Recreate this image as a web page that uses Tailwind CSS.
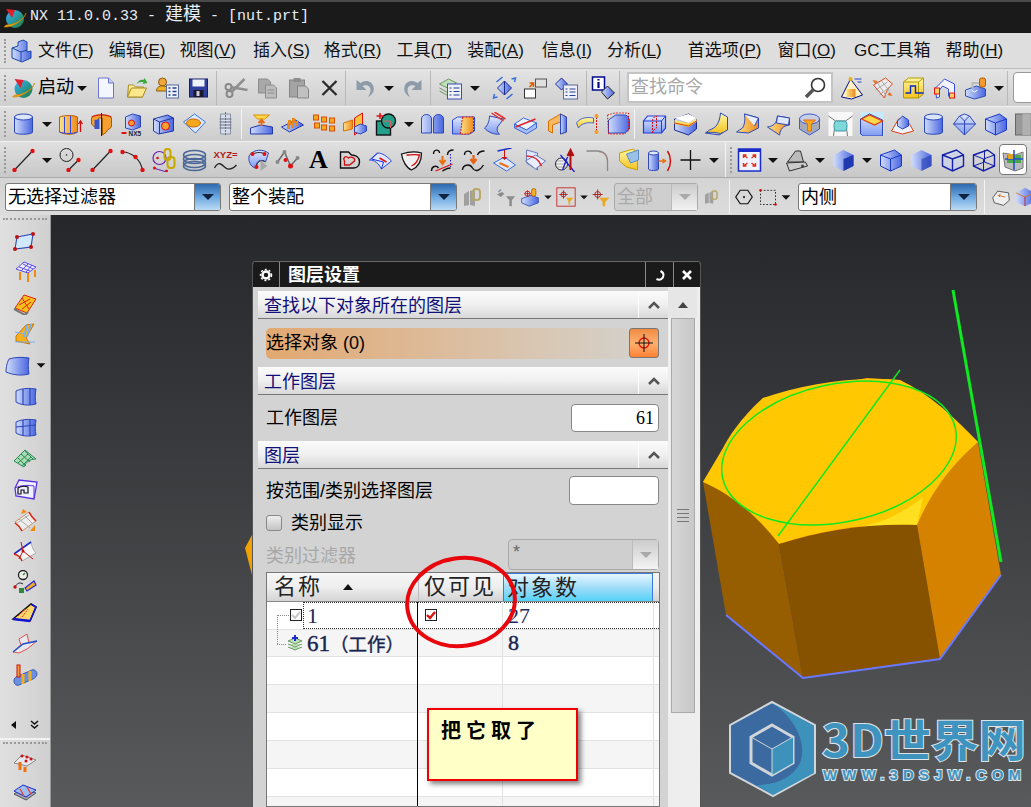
<!DOCTYPE html>
<html lang="zh-CN">
<head>
<meta charset="UTF-8">
<title>NX 11.0.0.33 - 建模 - [nut.prt]</title>
<script src="https://cdn.jsdelivr.net/npm/@tailwindcss/browser@4"></script>
</head>
<body class="w-[1031px] h-[807px] overflow-hidden bg-[#d8d8d8] text-black font-['Liberation_Sans','Noto_Sans_CJK_SC',sans-serif]">

<!-- shared icons -->
<svg class="absolute w-0 h-0">
<defs>
<linearGradient id="bl" x1="0" x2="1" y1="0" y2="0"><stop offset="0" stop-color="#cfdcfb"/><stop offset="1" stop-color="#4a66e0"/></linearGradient>
<linearGradient id="bv" x1="0" x2="0" y1="0" y2="1"><stop offset="0" stop-color="#dfe7fd"/><stop offset="1" stop-color="#7f9bf0"/></linearGradient>
<linearGradient id="ol" x1="0" x2="1" y1="0" y2="0"><stop offset="0" stop-color="#fbe28a"/><stop offset="1" stop-color="#f08a1c"/></linearGradient>
<linearGradient id="yl" x1="0" x2="0" y1="0" y2="1"><stop offset="0" stop-color="#fff7a8"/><stop offset="1" stop-color="#f4c21e"/></linearGradient>
<linearGradient id="gl" x1="0" x2="1" y1="0" y2="1"><stop offset="0" stop-color="#38b6ff"/><stop offset="1" stop-color="#1b7a3a"/></linearGradient>
</defs>
<symbol id="nx" viewBox="0 0 24 24"><circle cx="12" cy="13" r="9" fill="url(#gl)"/><path d="M1 21C8 22 21 15 23 7c-2 7-12 12-20 12z" fill="#f2a81d" stroke="#c87c00" stroke-width=".6"/><path d="M3 3l9 1-3 8z" fill="#e0202a"/></symbol>
<symbol id="block" viewBox="0 0 24 24"><path d="M3 9l6-2v-4l5-2 4 2v10l4-1v7l-9 4-10-4z" fill="url(#bl)" stroke="#1c47a8"/><path d="M3 9l9 4 6-2M12 13v9" fill="none" stroke="#1c47a8"/></symbol>
<symbol id="doc" viewBox="0 0 24 24"><path d="M5 2h10l5 5v15H5z" fill="#f3f5ff" stroke="#6a74c8"/><path d="M15 2v5h5" fill="#c8cff2" stroke="#6a74c8"/></symbol>
<symbol id="folder" viewBox="0 0 24 24"><path d="M3 21l1-12h5l2 2h8l-1 10z" fill="url(#yl)" stroke="#a58a2a"/><path d="M3 21l4-9h15l-4 9z" fill="#fbe88a" stroke="#a58a2a"/><path d="M12 8c2-4 5-5 7-4l1-2 3 5-5 1 1-2c-2 0-5 0-7 2z" fill="#3aa93a"/></symbol>
<symbol id="user" viewBox="0 0 24 24"><circle cx="7" cy="6" r="4" fill="#f0a83c" stroke="#8a5a14"/><path d="M1 15c0-4 3-5 6-5s5 1 5 3v2z" fill="#f2b01e" stroke="#8a5a14"/><rect x="11" y="9" width="12" height="13" fill="#eef1fa" stroke="#5a6a9a"/><path d="M13 12h2M17 12h4M13 15.500h2M17 15.500h4M13 19h2M17 19h4" stroke="#27408f" stroke-width="1.300"/></symbol>
<symbol id="floppy" viewBox="0 0 24 24"><rect x="3" y="3" width="18" height="18" fill="#2e3f9e" stroke="#16205e"/><rect x="6" y="3.500" width="12" height="7" fill="#eef1fa"/><rect x="7" y="14" width="10" height="7" fill="#1a1a2a"/><rect x="10" y="15" width="3" height="5" fill="#ccd"/></symbol>
<symbol id="scissors" viewBox="0 0 24 24"><circle cx="5" cy="18" r="3" fill="none" stroke="#8a8a8a" stroke-width="2"/><circle cx="4" cy="11" r="3" fill="none" stroke="#8a8a8a" stroke-width="2"/><path d="M7 16L20 3M6 11l17 3" stroke="#8f8f8f" stroke-width="2.500" fill="none"/></symbol>
<symbol id="copy" viewBox="0 0 24 24"><path d="M3 3h9l3 3v11H3z" fill="#a8a8a8" stroke="#8c8c8c"/><path d="M10 9h8l3 3v10H10z" fill="#bcbcbc" stroke="#8c8c8c"/><path d="M12 14h7M12 17h7" stroke="#8c8c8c"/></symbol>
<symbol id="paste" viewBox="0 0 24 24"><rect x="3" y="4" width="15" height="17" fill="#a4a4a4" stroke="#858585"/><rect x="7" y="2" width="7" height="4" fill="#8c8c8c"/><path d="M11 10h8l3 3v9H11z" fill="#c0c0c0" stroke="#858585"/></symbol>
<symbol id="x" viewBox="0 0 24 24"><path d="M5 5l14 14M19 5L5 19" stroke="#2b2b2b" stroke-width="2.300"/></symbol>
<symbol id="undo" viewBox="0 0 24 24"><path d="M3 4v10h10l-4-4c4-2 8 0 8 4 0 3-1 5-3 7 5-2 7-6 6-10-1-6-8-8-13-4z" fill="#8e9ba8"/></symbol>
<symbol id="redo" viewBox="0 0 24 24"><path d="M21 4v10H11l4-4c-4-2-8 0-8 4 0 3 1 5 3 7-5-2-7-6-6-10 1-6 8-8 13-4z" fill="#8e9ba8"/></symbol>
<symbol id="layers" viewBox="0 0 24 24"><path d="M1 8l9-5 8 4-9 5zM1 12l9 5M1 15l9 5" fill="#bfe0b8" stroke="#6f9a66"/><rect x="9" y="8" width="14" height="15" fill="#eef1fa" stroke="#3a4fb4"/><path d="M11 12h2M15 12h6M11 15.500h2M15 15.500h6M11 19h2M15 19h6" stroke="#27408f" stroke-width="1.200"/></symbol>
<symbol id="dia" viewBox="0 0 24 24"><path d="M5 12l7-7 7 7-7 7z" fill="url(#bl)" stroke="#1a2c8f"/><path d="M12 5v14" stroke="#1a2c8f"/><path d="M2 18l-1 4 4-1M22 6l1-4-4 1M4 6l6-5M20 18l-6 5" fill="none" stroke="#3a6be0" stroke-width="1.500"/></symbol>
<symbol id="swap" viewBox="0 0 24 24"><rect x="12" y="3" width="11" height="8" fill="#dfdfdf" stroke="#555"/><rect x="1" y="13" width="11" height="9" fill="#fff" stroke="#333"/><path d="M6 11l4-4M6 7h4v4" stroke="#e05a00" stroke-width="1.600" fill="none"/></symbol>
<symbol id="dlist" viewBox="0 0 24 24"><path d="M1 8l6-6 6 6-6 6z" fill="url(#bl)" stroke="#1a2c8f"/><rect x="9" y="9" width="14" height="14" fill="#eef1fa" stroke="#5a6a9a"/><path d="M11 13h2M15 13h6M11 16h2M15 16h6M11 19.500h2M15 19.500h6" stroke="#27408f" stroke-width="1.200"/></symbol>
<symbol id="info" viewBox="0 0 24 24"><rect x="1" y="1" width="12" height="13" fill="#fff" stroke="#000a8a" stroke-width="1.500"/><path d="M7 3v1.500M7 6v6" stroke="#000a8a" stroke-width="2.200"/><path d="M10 16l6-6 7 7-7 6z" fill="url(#bl)" stroke="#222"/></symbol>
<symbol id="pyr" viewBox="0 0 24 24"><path d="M11 3L2 21l10 2 11-4z" fill="#fff2c0" stroke="#000a8a"/><path d="M7 13h9v8H7z" fill="url(#ol)"/><circle cx="11" cy="3" r="2" fill="#e8b020"/><path d="M15 3h7M18 6h4" stroke="#2244cc"/></symbol>
<symbol id="gridc" viewBox="0 0 24 24"><path d="M3 9l12-7 7 6c-4 3-7 8-8 14z" fill="#ececec" stroke="#d84a20"/><path d="M7 7l8 12M11 5l8 10M5 14l12-8M9 19l10-8" stroke="#aaa"/><path d="M2 4l5 1-2 3zM22 20l-5-1 2-3z" fill="#e86a10"/></symbol>
<symbol id="ybox" viewBox="0 0 24 24"><path d="M2 6l5-4h15v16l-5 4H2z" fill="url(#yl)" stroke="#b49a00"/><path d="M2 6h15v16M17 6l5-4" stroke="#b49a00" fill="none"/><path d="M4 17h5V10h5v7h8" stroke="#0a2ac0" fill="none" stroke-width="1.400"/></symbol>
<symbol id="wire" viewBox="0 0 24 24"><path d="M3 12l9-9 10 5v12l-4 2-2-2v-7l-6-3-3 4v7l-3 1z" fill="#f3f3ff" stroke="#3a4fe0"/><rect x="2" y="12" width="5" height="6" fill="#ffd060" stroke="#e01010"/><rect x="17" y="17" width="5" height="5" fill="#ffd060" stroke="#e01010"/></symbol>
<symbol id="tap" viewBox="0 0 24 24"><path d="M2 14l11-4 9 3v7l-11 3-9-3z" fill="url(#bl)" stroke="#2a50b0"/><path d="M9 12V7h8" stroke="#bbb" stroke-width="2" fill="none"/><rect x="16" y="2" width="6" height="9" rx="2" fill="#f59a30" stroke="#b85a00"/><path d="M8 14l3 2 3-2" stroke="#fff" fill="none"/></symbol>
<symbol id="cyl" viewBox="0 0 24 24"><path d="M3 5v15c0 3 18 3 18 0V5z" fill="url(#bl)" stroke="#2d47b8"/><ellipse cx="12" cy="5" rx="9" ry="3" fill="#dbe5fd" stroke="#2d47b8"/></symbol>
<symbol id="ext" viewBox="0 0 24 24"><path d="M1 5c6-2 14-2 18 0v15c-4 3-13 3-18 0z" fill="url(#ol)" stroke="#c05a00"/><path d="M6 5v16M12 4v17M1 20c6 2 13 2 18 0" stroke="#2d47e0" fill="none"/><path d="M22 9v11M20 12l2-3 2 3" stroke="#d01010" fill="none" stroke-width="1.300"/></symbol>
<symbol id="rev" viewBox="0 0 24 24"><path d="M2 6c4-4 16-4 20 0v8c0 3-5 3-5 6l-4 3V6H9v9l-4 0-3-3z" fill="#f6a030" stroke="#a85a00"/><path d="M5 8l5-1v10H5z" fill="#3a55c8"/><path d="M12 1v23" stroke="#222"/><path d="M2 5c4-3 16-3 20 0" stroke="#e01010" fill="none"/></symbol>
<symbol id="boss" viewBox="0 0 24 24"><path d="M2 7l14-4 6 3v13l-15 3-5-3z" fill="url(#bl)" stroke="#2238a8"/><path d="M2 7l6 3 14-4M8 10v12" stroke="#2238a8" fill="none"/><circle cx="14" cy="14" r="4" fill="#f6a030" stroke="#e01010"/></symbol>
<symbol id="pad" viewBox="0 0 24 24"><path d="M1 10l11-8 11 8-10 11z" fill="#dfe9ff" stroke="#3a78d8"/><ellipse cx="11" cy="11" rx="7" ry="4" fill="#f6a81c" stroke="#c86a00"/></symbol>
<symbol id="thread" viewBox="0 0 24 24"><path d="M7 2h10v20H7z" fill="#d8dce8" stroke="#8a92a8"/><path d="M6 7h12M6 10h12M6 13h12M6 16h12" stroke="#6a7288"/><path d="M12 0v24" stroke="#e04040" stroke-dasharray="2 1"/></symbol>
<symbol id="emb" viewBox="0 0 24 24"><path d="M1 16l10-3 12 2v7H1z" fill="url(#bl)" stroke="#2238a8"/><path d="M4 3h16l-5 4H8z" fill="#ffd84a" stroke="#d89000"/><path d="M12 8v6M9 11l3-3 3 3" stroke="#e86a10" stroke-width="2" fill="none"/></symbol>
<symbol id="pins" viewBox="0 0 24 24"><path d="M1 15l14-7 8 5-14 7z" fill="url(#bl)" stroke="#2238a8"/><path d="M9 8v5M13 6v5M12 11v5M16 9v5M8 13v4" stroke="#e88a20" stroke-width="3"/></symbol>
<symbol id="pat" viewBox="0 0 24 24"><g fill="#f6a81c" stroke="#d8500a"><rect x="2" y="3" width="5" height="5"/><rect x="10" y="5" width="5" height="5"/><rect x="18" y="6" width="5" height="5"/><rect x="3" y="11" width="5" height="5"/><rect x="10" y="13" width="5" height="5"/><rect x="18" y="14" width="5" height="5"/></g></symbol>
<symbol id="mir" viewBox="0 0 24 24"><path d="M1 11l9-3v9l-9 2z" fill="url(#ol)" stroke="#d87000"/><path d="M12 6l8-5v16l-8 6z" fill="#ffc43a" stroke="#e01010"/><path d="M12 15l6-3 6 2v5l-6 3-6-2z" fill="url(#bl)" stroke="#2d47b8"/></symbol>
<symbol id="unite" viewBox="0 0 24 24"><rect x="3" y="9" width="14" height="14" fill="#22a08c" stroke="#111" stroke-width="1.400"/><circle cx="15" cy="9" r="7" fill="#22a08c" stroke="#111" stroke-width="1.400"/><path d="M3 4h7M6.500 1v6" stroke="#e01010" stroke-width="1.500"/><path d="M10 9h7v7" stroke="#e06060" fill="none"/></symbol>
<symbol id="pil" viewBox="0 0 24 24"><path d="M1 21V7c0-6 10-6 10 0v14zM13 21V7c0-6 10-6 10 0v14z" fill="url(#bl)" stroke="#2d47b8"/></symbol>
<symbol id="ebox" viewBox="0 0 24 24"><path d="M1 8l5-3h17v14l-5 3H1z" fill="url(#bv)" stroke="#2d47d8"/><path d="M11 5h11v14l-5 3H9z" fill="url(#ol)" stroke="#e01010" stroke-dasharray="2 1"/></symbol>
<symbol id="sweep" viewBox="0 0 24 24"><path d="M7 4l14 3-6 8c-1 3 0 6 2 7-5 1-12-2-15-6 3-2 5-7 5-12z" fill="url(#bv)" stroke="#2d47b8"/><path d="M9 1l12 8M12 0l11 7" stroke="#e03030" stroke-width="1.500"/></symbol>
<symbol id="slab" viewBox="0 0 24 24"><path d="M1 12l9-6 13 5-10 7z" fill="#eef2ff" stroke="#3a6ae0"/><path d="M1 12v4l12 6 10-6v-5l-10 7z" fill="#a8bcf5" stroke="#3a6ae0"/><path d="M2 15l20-8" stroke="#e02020" stroke-width="1.500"/></symbol>
<symbol id="frame" viewBox="0 0 24 24"><path d="M4 9l12-7 6 3v15l-6 2V10L8 13v8l-4-2z" fill="#f6b860" stroke="#d87000"/><path d="M16 2l6 3v15l-6 2z" fill="url(#bl)" stroke="#2d47b8"/></symbol>
<symbol id="chord" viewBox="0 0 24 24"><path d="M1 11c4-6 12-6 17-5v5c-5-1-12 0-15 5z" fill="url(#yl)" stroke="#4a66c8"/><path d="M21 2v20" stroke="#e01010" stroke-dasharray="2 1"/><circle cx="21" cy="4" r="2" fill="#f0a020"/><circle cx="21" cy="20" r="2" fill="#f0a020"/></symbol>
<symbol id="rnd" viewBox="0 0 24 24"><path d="M2 8l7-5h10c3 1 4 4 4 7v7l-5 4H2z" fill="url(#bl)" stroke="#2d47b8"/><path d="M1 3l7-2h14v18l-4 3H2z" fill="none" stroke="#e01010" stroke-dasharray="1.500 1.500"/></symbol>
<symbol id="bx1" viewBox="0 0 24 24"><path d="M1 9l4-5h18v12l-4 5H1z" fill="url(#bv)" stroke="#1e3ce0" stroke-width="1.200"/><path d="M1 9h18v12M19 9l4-5" stroke="#1e3ce0" fill="none"/><path d="M10 21V9c0-3 3-5 4-5v12c-1 1-4 2-4 5z" fill="none" stroke="#d01010" stroke-dasharray="2 1"/></symbol>
<symbol id="bx2" viewBox="0 0 24 24"><path d="M1 7l14-5 8 5v10l-8 6-14-5z" fill="url(#bl)" stroke="#1a2c8f"/><path d="M1 8l14 3 8-5v4l-8 5-14-3z" fill="url(#yl)"/><path d="M1 11l14 3 8-5" stroke="#e04010" fill="none"/><path d="M1 6l14-4 8 4-8 5z" fill="#fff"/></symbol>
<symbol id="crn1" viewBox="0 0 24 24"><path d="M16 1l7 4v13l-7 4c-4-2-12-2-15-1l4-3c6-2 10-6 11-17z" fill="url(#yl)" stroke="#2d47b8"/><path d="M1 21l14 2 3-3" fill="none" stroke="#2d47b8"/></symbol>
<symbol id="crn2" viewBox="0 0 24 24"><path d="M9 2l14 4v10l-10 5-12-1 6-4c2-3 3-8 2-14z" fill="url(#ol)" stroke="#2d47b8"/><path d="M9 2l14 4-4 8" fill="#e8efff" stroke="#2d47b8"/></symbol>
<symbol id="band" viewBox="0 0 24 24"><path d="M1 15c6-1 9-3 10-11l12 2v7c-7 1-9 4-10 10z" fill="url(#ol)" stroke="#2d47b8"/><path d="M11 4l12 2-1 7-12-2z" fill="#dfe7fd" stroke="#2d47b8"/></symbol>
<symbol id="cup" viewBox="0 0 24 24"><path d="M2 7v10l10 6 10-6V7z" fill="#a8aab8" stroke="#3a5ad8"/><ellipse cx="12" cy="7" rx="10" ry="5" fill="#c8cfe0" stroke="#3a5ad8"/><path d="M6 8h12l-4 4v7h-4v-7z" fill="#f6a81c" stroke="#e86a10"/></symbol>
<symbol id="blend" viewBox="0 0 24 24"><rect x="0" y="0" width="24" height="24" fill="#f8f8f8"/><path d="M0 4l7 5h10l7-5M7 9l-2 15M17 9l2 15" stroke="#777" fill="none"/><path d="M7 9h10c2 2 2 8 0 10H7c-2-2-2-8 0-10z" fill="#7fd8d8" stroke="#3a98a8"/></symbol>
<symbol id="top" viewBox="0 0 24 24"><rect x="1" y="0" width="23" height="24" fill="#c8e8ff"/><path d="M1 7l9-5 13 6v16H4L1 22z" fill="url(#bv)" stroke="#2d47b8"/><path d="M2 7l8-4 13 6-8 4z" fill="#ffd84a" stroke="#e04010" stroke-width="1.300"/></symbol>
<symbol id="pry" viewBox="0 0 24 24"><path d="M1 19L8 7h8l7 12-11 3z" fill="#eef2ff" stroke="#e04010"/><path d="M7 9l5-5 6 4v6l-6 3-5-3z" fill="url(#bl)" stroke="#2d47b8"/></symbol>
<symbol id="cb" viewBox="0 0 24 24"><path d="M2 7l14-5 7 5v11l-11 5L2 18z" fill="url(#bl)" stroke="#1a38c8"/><path d="M2 7l10 4 11-4M12 11v12" fill="none" stroke="#1a38c8"/></symbol>
<symbol id="cb2" viewBox="0 0 24 24"><path d="M2 7l10-5 10 5v11l-10 5L2 18z" fill="url(#bl)"/><path d="M12 11l10-4v11l-10 5z" fill="#2a3fb0" opacity=".65"/></symbol>
<symbol id="cb3" viewBox="0 0 24 24"><path d="M2 7l10-5 10 5v11l-10 5L2 18z" fill="url(#bl)"/><path d="M12 11l10-4v11l-10 5z" fill="#2038b0"/></symbol>
<symbol id="wf" viewBox="0 0 24 24"><path d="M2 7l14-5 7 5v11l-11 5L2 18z" fill="#c8d2f4" fill-opacity=".5" stroke="#1420a8" stroke-width="1.400"/><path d="M2 7l10 4 11-4M12 11v12" fill="none" stroke="#1420a8" stroke-width="1.400"/></symbol>
<symbol id="wf2" viewBox="0 0 24 24"><path d="M2 7l14-5 7 5v11l-11 5L2 18z" fill="none" stroke="#1420a8" stroke-width="1.400"/><path d="M2 7l10 4 11-4M12 11v12M2 18l11-4 10 4M13 14V2" fill="none" stroke="#1420a8"/></symbol>
<symbol id="diam" viewBox="0 0 24 24"><path d="M1 12l6-8 5-2 5 2 6 8-11 11z" fill="url(#bv)" stroke="#2d47b8"/><path d="M1 12h22M7 4l5 5 5-5M12 9l0 14" stroke="#2d47b8" fill="none"/></symbol>
<symbol id="door" viewBox="0 0 24 24"><rect x="1" y="2" width="22" height="21" fill="#9a9a9a" stroke="#666"/><rect x="8" y="2" width="8" height="21" fill="#b0b0b0"/><circle cx="19" cy="11" r="2" fill="#6a9a6a"/></symbol>
<symbol id="ln" viewBox="0 0 24 24"><path d="M3 22L21 3" stroke="#222" stroke-width="1.200"/><circle cx="3" cy="22" r="2.200" fill="#e01010"/><circle cx="21" cy="3" r="2.200" fill="#e01010"/></symbol>
<symbol id="cln" viewBox="0 0 24 24"><circle cx="8" cy="7" r="6.500" fill="none" stroke="#222"/><circle cx="8" cy="7" r=".8" fill="#222"/><path d="M10 22l10-10" stroke="#222" stroke-width="1.200"/><circle cx="10" cy="22" r="2.200" fill="#e01010"/><circle cx="20" cy="12" r="2.200" fill="#e01010"/></symbol>
<symbol id="arc" viewBox="0 0 24 24"><path d="M2 4c9 0 19 8 20 19" fill="none" stroke="#222" stroke-width="1.200"/><circle cx="2" cy="4" r="2.200" fill="#e01010"/><circle cx="15" cy="9" r="2.200" fill="#e01010"/><circle cx="22" cy="22" r="2.200" fill="#e01010"/></symbol>
<symbol id="chain" viewBox="0 0 24 24"><circle cx="8" cy="10" r="6.500" fill="none" stroke="#6a1fb0" stroke-width="1.200"/><circle cx="6" cy="10" r="1.300" fill="#e01010"/><rect x="13" y="1" width="6" height="11" rx="3" fill="none" stroke="#c8a800" stroke-width="2"/><rect x="16" y="9" width="7" height="11" rx="3" fill="none" stroke="#c8a800" stroke-width="2"/><path d="M2 20l13 4" stroke="#6a1fb0"/><circle cx="3" cy="20" r="1.500" fill="#e01010"/><circle cx="15" cy="23" r="1.500" fill="#e01010"/></symbol>
<symbol id="spiral" viewBox="0 0 24 24"><g fill="none" stroke="#4a6898" stroke-width="1.500"><ellipse cx="12" cy="7" rx="11" ry="4.500"/><ellipse cx="12" cy="11" rx="11" ry="4.500"/><ellipse cx="12" cy="15" rx="11" ry="4.500"/><ellipse cx="12" cy="18" rx="11" ry="4.500"/></g></symbol>
<symbol id="surf" viewBox="0 0 24 24"><path d="M5 7C10 1 18 1 24 5l-3 9c-6-4-10 0-9 6-6 0-9-8-7-13z" fill="url(#bv)" stroke="#2d47b8"/><path d="M8 6c5-2 9-2 12 0M12 20c0-5 2-8 8-7" fill="none" stroke="#222"/><circle cx="8" cy="6" r="2" fill="#e01010"/><circle cx="20" cy="6" r="2" fill="#e01010"/><circle cx="12" cy="19" r="2" fill="#e01010"/><path d="M16 12l7 6-7 5z" fill="#aaa"/></symbol>
<symbol id="node" viewBox="0 0 24 24"><path d="M2 14l7-10 6 14 7-8" fill="none" stroke="#666" stroke-width="1.400"/><circle cx="9" cy="4" r="2" fill="#888"/><circle cx="2" cy="14" r="2" fill="#888"/><circle cx="15" cy="18" r="2.500" fill="#e01010"/><circle cx="10" cy="12" r="2" fill="#e01010"/><circle cx="22" cy="10" r="2" fill="#888"/></symbol>
<symbol id="heart" viewBox="0 0 24 24"><path d="M3 4h8l3 3c4 0 8 2 8 7 0 4-3 6-6 6H3z" fill="none" stroke="#111" stroke-width="1.400"/><path d="M7 13c-2-3 1-6 4-3 3-2 7 0 6 3l-5 4H7z" fill="none" stroke="#d01010" stroke-width="1.300"/></symbol>
<symbol id="strip" viewBox="0 0 24 24"><path d="M1 12l8-7c5 0 9 3 14 8l-10 8C10 15 6 12 1 12z" fill="#dfe7fd" stroke="#2d47d8"/><path d="M9 5l-6 6 12 3-2 7" fill="none" stroke="#2030e0"/><path d="M11 10l7 4" stroke="#e01010" stroke-width="1.600"/></symbol>
<symbol id="shld" viewBox="0 0 24 24"><path d="M2 6c6-2 14-3 20-1 0 7-3 14-10 17-5-2-9-9-10-16z" fill="#f0f0f0" stroke="#111" stroke-width="1.300"/><path d="M7 7c4 0 9-1 13 0-1 4-3 9-8 11" fill="none" stroke="#d01010" stroke-width="1.300"/></symbol>
<symbol id="cv1" viewBox="0 0 24 24"><path d="M3 6c0-5 6-5 6-1M1 23c0-5 5-6 7-3M23 2c-4 0-6 2-6 5M20 20c-4 0-6 2-8 3" fill="none" stroke="#111" stroke-width="1.400"/><path d="M20 6v13" stroke="#1a1ae0" stroke-dasharray="1.500 1.500"/><path d="M12 8v7M9 12l3 4 3-4" stroke="#e87010" stroke-width="2" fill="none"/><path d="M5 23l17-7" stroke="#e01010" stroke-width="1.300"/></symbol>
<symbol id="cv2" viewBox="0 0 24 24"><path d="M3 7c0-5 6-5 7-1M1 22c0-5 7-7 10-2s8 2 11-3M23 3c-4 0-6 1-7 4" fill="none" stroke="#111" stroke-width="1.400"/><path d="M12 7v7M9 11l3 4 3-4" stroke="#e86010" stroke-width="2.200" fill="none"/></symbol>
<symbol id="proj" viewBox="0 0 24 24"><path d="M1 15l11-6 11 8-9 6z" fill="#dfe7fd" stroke="#3a6ae0"/><path d="M5 3l14-3" stroke="#1a2cd0" stroke-width="1.500"/><path d="M12 2v9" stroke="#d01010"/><path d="M9 9l3 3 3-3" fill="#d01010"/><path d="M7 15l9 4" stroke="#f07010" stroke-width="2"/></symbol>
<symbol id="plane2" viewBox="0 0 24 24"><path d="M3 2l11 3v17L3 15z" fill="#e0e8ff" stroke="#6a7ab8"/><path d="M2 13l10-6 10 6-10 8z" fill="#e8eeff" stroke="#6a7ab8"/><path d="M3 8c8 0 12 3 15 10" fill="none" stroke="#e02020" stroke-width="1.700"/></symbol>
<symbol id="sect" viewBox="0 0 24 24"><ellipse cx="7" cy="16" rx="6" ry="6" fill="#f3f3f3" stroke="#222"/><path d="M2 16h10M2 13h10M2 19h10" stroke="#555" stroke-dasharray="1 1"/><path d="M6 7l14 17M13 9l-5 13" stroke="#1a1ad0" stroke-width="1.300"/><path d="M16 22V4M13 8l3-6 3 6" stroke="#b01010" stroke-width="2" fill="#b01010"/></symbol>
<symbol id="fil" viewBox="0 0 24 24"><path d="M1 3h11c6 0 10 4 10 10v10" fill="none" stroke="#888" stroke-width="1.300"/><path d="M14 4c5 1 7 4 8 8" fill="none" stroke="#d08060" stroke-dasharray="1 1"/></symbol>
<symbol id="shell" viewBox="0 0 24 24"><path d="M3 5l14-4 4 5v16l-11-3-7-6z" fill="url(#yl)" stroke="#c8a000"/><path d="M10 6l12-4v10l-8 3z" fill="#9ac0e8" stroke="#5a8ac0"/></symbol>
<symbol id="cylr" viewBox="0 0 24 24"><path d="M1 5v16c0 2 10 2 10 0V5z" fill="url(#bl)" stroke="#2d47b8"/><ellipse cx="6" cy="5" rx="5" ry="2" fill="#dfe7fd" stroke="#2d47b8"/><path d="M11 13h6M15 11l3 2-3 2" stroke="#e87010" stroke-width="1.500" fill="none"/><path d="M20 3c4 6 4 14 0 20" fill="none" stroke="#d01010" stroke-width="1.500"/></symbol>
<symbol id="plus" viewBox="0 0 24 24"><path d="M12 2v20M2 12h20" stroke="#111" stroke-width="1.300"/></symbol>
<symbol id="fit" viewBox="0 0 24 24"><rect x="1" y="1" width="22" height="22" fill="#f0f2ff" stroke="#1a2cc8" stroke-width="1.500"/><rect x="1" y="1" width="22" height="3" fill="#1a2cc8"/><path d="M10 10L6 7M6 10V7h3M14 10l4-3M18 10V7h-3M10 15l-4 3M6 15v3h3M14 15l4 3M18 15v3h-3" stroke="#e03010" stroke-width="1.400" fill="none"/></symbol>
<symbol id="cam" viewBox="0 0 24 24"><path d="M3 14l8-11h5l3 11z" fill="#bbb" stroke="#333"/><path d="M2 15l19-1 2 4-18 5z" fill="#ccc" stroke="#333"/><circle cx="18" cy="18" r="1.500" fill="#444"/></symbol>
<symbol id="wcs" viewBox="0 0 24 24"><path d="M2 5l12 2 8-3v16l-8 3-10-4z" fill="#bbb" stroke="#777"/><path d="M6 7h14v8H6z" fill="#4aa84a"/><path d="M13 2v20M4 11h18" stroke="#1a50d0" stroke-width="1.500"/><path d="M7 6h5v5H7z" fill="#e8a020"/></symbol>
<symbol id="fchain" viewBox="0 0 24 24"><path d="M4 9l5-3v14l-5 1zM10 6l5-1v16l-5-1z" fill="#a0a0a0"/><rect x="13" y="4" width="7" height="11" rx="3" fill="none" stroke="#b8a868" stroke-width="2"/></symbol>
<symbol id="fnl" viewBox="0 0 24 24"><path d="M1 9l6-3 3 2-4 4zM12 11h11l-4 5v7h-3v-7z" fill="#8c8c8c"/><path d="M3 6l3-3" stroke="#7a9aa8" stroke-width="2"/></symbol>
<symbol id="xb" viewBox="0 0 24 24"><path d="M2 14l11-4 9 3v6l-11 4-9-4z" fill="url(#bl)" stroke="#2a50b0"/><rect x="14" y="2" width="5" height="9" rx="2" fill="#f6b020" stroke="#b85a00"/><path d="M5 8h8M9 4v8" stroke="#d01010"/><circle cx="9" cy="8" r="3" fill="none" stroke="#d01010"/></symbol>
<symbol id="fl2" viewBox="0 0 24 24"><rect x="1" y="1" width="22" height="22" fill="none" stroke="#c81818"/><path d="M4 9h10M9 4v10" stroke="#b01010"/><circle cx="9" cy="9" r="3" fill="none" stroke="#b01010"/><path d="M12 13h9l-4 4v4h-2v-4z" fill="#e8a820"/></symbol>
<symbol id="fl3" viewBox="0 0 24 24"><path d="M2 9h12M8 3v12" stroke="#a01010"/><circle cx="8" cy="9" r="3.500" fill="none" stroke="#a01010"/><path d="M10 13h12l-5 5v5h-3v-5z" fill="#e8a820"/></symbol>
<symbol id="hex" viewBox="0 0 24 24"><path d="M7 3h10l6 9-6 9H7l-6-9z" fill="none" stroke="#111" stroke-width="1.600"/><circle cx="12" cy="12" r="1.500" fill="#222"/></symbol>
<symbol id="dsh" viewBox="0 0 24 24"><rect x="3" y="4" width="18" height="17" fill="none" stroke="#111" stroke-dasharray="2 2"/><circle cx="3" cy="4" r="1.500" fill="#d01010"/><circle cx="21" cy="21" r="1.500" fill="#d01010"/></symbol>
<symbol id="tag" viewBox="0 0 24 24"><path d="M2 13l6-8 13 2 1 9-7 6-11-3z" fill="#eee" stroke="#444"/><path d="M8 10l9 2M11 8l-1 4" stroke="#d06010"/></symbol>
<symbol id="bcube" viewBox="0 0 24 24"><path d="M1 7l11-6 11 6v11l-11 5-11-5z" fill="url(#bl)"/><path d="M1 7l11 5 11-5" fill="none" stroke="#e07010"/><path d="M12 12v11" stroke="#d01010"/></symbol>
<symbol id="s1" viewBox="0 0 24 24"><path d="M4 8l16-3-2 13-16 2z" fill="#cfe8fb" stroke="#2d47b8" stroke-width="1.100"/><circle cx="4" cy="8" r="2" fill="#c01010"/><circle cx="20" cy="5" r="2" fill="#c01010"/><circle cx="18" cy="18" r="2" fill="#c01010"/><circle cx="2" cy="20" r="2" fill="#c01010"/></symbol>
<symbol id="s2" viewBox="0 0 24 24"><path d="M3 9l8-7 12 5-8 6z" fill="#eef0ff" stroke="#5a4ae8"/><path d="M6 7l11 4M10 4l10 5M8 11l7-7M13 12l6-7" stroke="#5a4ae8"/><path d="M7 12v8M15 13v9M22 10v7" stroke="#f08a10" stroke-width="2"/></symbol>
<symbol id="s3" viewBox="0 0 24 24"><path d="M2 17l9-13 12 4-9 14z" fill="#f6c01a" stroke="#e02010"/><path d="M6 14l11-6M9 18l9-7M9 7l7 11" stroke="#e02010"/><path d="M1 18l11 6 3-3" fill="none" stroke="#777" stroke-width="2"/></symbol>
<symbol id="s4" viewBox="0 0 24 24"><path d="M3 14l10-11 8-1-8 14 4 6-14-3z" fill="#f6b01a" stroke="#d07000"/><path d="M14 3l-3 12M18 2l-4 13" stroke="#79b0ee" stroke-width="2"/><path d="M2 10l10 2M2 20l20 0" stroke="#79b0ee"/></symbol>
<symbol id="s5" viewBox="0 0 24 24"><path d="M1 19c0-8 3-13 3-13 6-2 14-2 20-1-1 5-1 10 0 16-8 2-16 1-23-2z" fill="url(#bl)" stroke="#2d47b8"/></symbol>
<symbol id="s6" viewBox="0 0 24 24"><path d="M3 18V7c6-3 14-3 20-2-1 5-1 11 0 15-8 2-15 1-20-2z" fill="url(#bl)" stroke="#2d47b8"/><path d="M10 5v16M17 4v17" stroke="#2d47b8" stroke-width="1.200"/></symbol>
<symbol id="s7" viewBox="0 0 24 24"><path d="M3 18V7c6-3 14-3 20-2-1 5-1 11 0 15-8 2-15 1-20-2z" fill="url(#bl)" stroke="#2d47b8"/><path d="M10 5v16M17 4v17M3 12l20-2" stroke="#2d47b8" stroke-width="1.200"/></symbol>
<symbol id="s8" viewBox="0 0 24 24"><path d="M1 15l11-11 11 9c-6 0-10 3-12 8z" fill="#a8dcb0" stroke="#2a8a58"/><path d="M5 12l8 8M8 8l9 8M12 5l8 8M5 17l10-9M9 20l9-9" stroke="#2a8a58"/></symbol>
<symbol id="s9" viewBox="0 0 24 24"><path d="M2 11l4-8 18 2-3 17-18-3z" fill="#eef0ff" stroke="#5a30e0" stroke-width="1.300"/><path d="M2 11c6-3 13-3 19-2v12" fill="none" stroke="#5a30e0"/><path d="M5 17v-6c3-2 7-2 10-1v6h-4v-3H8v4z" fill="none" stroke="#111" stroke-width="1.200"/></symbol>
<symbol id="s10" viewBox="0 0 24 24"><path d="M2 14L16 4c2 5 4 7 7 9L9 23c-2-4-4-7-7-9z" fill="#eee" stroke="#d89060"/><path d="M6 11l11 9M11 7l9 9M4 15L16 7" stroke="#aaa"/><path d="M2 15c3 2 5 4 7 8M16 4c2 4 4 6 7 9" stroke="#e02010" stroke-width="1.500" fill="none"/><path d="M14 4l-4-3-2 5zM22 17v6h-5z" fill="#f08a10"/></symbol>
<symbol id="s11" viewBox="0 0 24 24"><path d="M1 15L18 3c1 6 3 9 5 11L9 22c-1-3-4-6-8-7z" fill="#f6f6f6" stroke="#aaa"/><path d="M1 15L18 3" stroke="#1a2cd0" stroke-width="1.600"/><path d="M1 15c4 1 7 4 8 7" fill="none" stroke="#e02010" stroke-width="1.300"/><path d="M10 12L8 3M10 12l10 8M10 12l-4 8" stroke="#c01010"/><circle cx="10" cy="12" r="1.500" fill="#c01010"/></symbol>
<symbol id="s12" viewBox="0 0 24 24"><circle cx="10" cy="5" r="4.500" fill="#eee" stroke="#222" stroke-width="1.300"/><path d="M10 5l2-2" stroke="#3a8a3a" stroke-width="1.400"/><path d="M2 17c2-4 5-5 8-3" fill="none" stroke="#222"/><circle cx="2" cy="17" r="1.700" fill="#c01010"/><rect x="6" y="18" width="5" height="5" fill="#2a8a3a"/><path d="M12 18l9-7 2 4-9 6z" fill="#f0b020" stroke="#2a2ad0" stroke-width="1.200"/></symbol>
<symbol id="s13" viewBox="0 0 24 24"><path d="M0 18L18 3l5 3-6 14z" fill="#ffd868" stroke="#111" stroke-width="1.500"/><path d="M0 18l17 2" stroke="#1414d8" stroke-width="2.400"/><path d="M18 3l5 3-6 14" stroke="#1414d8" stroke-width="1.600" fill="none"/><path d="M5 15l7-7M9 16l6-8" stroke="#e03030" stroke-dasharray="2 1"/></symbol>
<symbol id="s14" viewBox="0 0 24 24"><path d="M0 20L8 13 6 7l8-5 2 9 8-2-10 8-8 4z" fill="#e8e8ee" stroke="#e05050"/><path d="M0 20l10-8 14-3" fill="none" stroke="#1a50d0" stroke-width="1.400"/></symbol>
<symbol id="s15" viewBox="0 0 24 24"><path d="M3 14l16-7c3-1 5 2 5 4s-2 4-4 5l-14 6c-3 1-5-1-5-4s1-3 2-4z" fill="#6a90e0" stroke="#3a58b0"/><path d="M10 11v10M17 8v10" stroke="#f0b020" stroke-width="3"/><rect x="4" y="2" width="3" height="12" fill="#f0a030" stroke="#d01010"/></symbol>
<symbol id="s16" viewBox="0 0 24 24"><path d="M1 14l8-8 14 5-9 6z" fill="#e8e8f0" stroke="#888"/><path d="M7 13v8M12 18v5" stroke="#f07010" stroke-width="3"/><circle cx="9" cy="7" r="1.500" fill="#d01010"/><circle cx="14" cy="8" r="1.500" fill="#d01010"/><circle cx="18" cy="10" r="1.500" fill="#d01010"/><circle cx="13" cy="12" r="1.500" fill="#d01010"/></symbol>
<symbol id="s17" viewBox="0 0 24 24"><path d="M1 15l9-6 13 5-10 7z" fill="#a0a0a8" stroke="#555"/><path d="M1 12l9-6 13 5-10 7z" fill="#9ac0f0" stroke="#1a2cd0"/><path d="M7 10l4 7M14 8l4 7" stroke="#f04040" stroke-width="1.500"/></symbol>
<symbol id="caret" viewBox="0 0 16 24"><path d="M3 10h10l-5 5z" fill="#111"/></symbol>
</svg>

<!-- 标题栏 -->
<header class="h-[33px] bg-[#1a1a1a] border-t-2 border-[#4a4a4a] flex items-center pl-[3px]">
    <svg class="w-[24px] h-[24px] shrink-0"><use href="#nx"/></svg>
    <span class="ml-[3px] text-[15px] text-[#e6eef6] whitespace-pre font-['Liberation_Mono','Noto_Sans_CJK_SC',monospace]">NX 11.0.0.33 - <span class="text-[18px] leading-none">建模</span> - [nut.prt]</span>
</header>

<!-- 菜单 -->
<nav class="h-[36px] bg-[#dedede] border-b border-[#bcbcbc] flex items-center text-[17px] text-[#111] whitespace-nowrap">
    <span class="w-[6px] h-[24px] ml-[4px] border-l-2 border-dotted border-[#999]"></span>
    <svg class="w-[24px] h-[24px] ml-[-1px] shrink-0"><use href="#block"/></svg>
    <span class="ml-[5px]">文件(<u>F</u>)</span>
    <span class="ml-[15px]">编辑(<u>E</u>)</span>
    <span class="ml-[14px]">视图(<u>V</u>)</span>
    <span class="ml-[17px]">插入(<u>S</u>)</span>
    <span class="ml-[14px]">格式(<u>R</u>)</span>
    <span class="ml-[15px]">工具(<u>T</u>)</span>
    <span class="ml-[15px]">装配(<u>A</u>)</span>
    <span class="ml-[18px]">信息(<u>I</u>)</span>
    <span class="ml-[15px]">分析(<u>L</u>)</span>
    <span class="ml-[26px]">首选项(<u>P</u>)</span>
    <span class="ml-[16px]">窗口(<u>O</u>)</span>
    <span class="ml-[18px]">GC工具箱</span>
    <span class="ml-[15px]">帮助(<u>H</u>)</span>
</nav>

<!-- 工具栏 1 -->
<div class="h-[38px] bg-gradient-to-b from-[#e4e4e4] to-[#cfcfcf] border-b border-[#f2f2f2] flex items-center overflow-hidden">
    <span class="w-[3px] h-[26px] ml-[4px] mr-[1px] border-l-2 border-dotted border-[#999] shrink-0"></span>
    <svg class="w-[31px] h-6 shrink-0"><use href="#nx"/></svg>
    <span class="ml-[-1px] text-[18px] w-[37px] shrink-0 whitespace-nowrap">启动</span>
    <svg class="w-[16px] h-6 shrink-0 ml-[-1px]"><use href="#caret"/></svg>
    <svg class="w-[31px] h-6 shrink-0"><use href="#doc"/></svg>
    <svg class="w-[31px] h-6 shrink-0"><use href="#folder"/></svg>
    <svg class="w-[31px] h-6 shrink-0"><use href="#user"/></svg>
    <svg class="w-[31px] h-6 shrink-0"><use href="#floppy"/></svg>
    <span class="w-[5px] h-[34px] border-l border-[#b8b8b8] ml-[2px] shrink-0"></span>
    <svg class="w-[31px] h-6 shrink-0"><use href="#scissors"/></svg>
    <svg class="w-[31px] h-6 shrink-0"><use href="#copy"/></svg>
    <svg class="w-[31px] h-6 shrink-0"><use href="#paste"/></svg>
    <svg class="w-[31px] h-6 shrink-0"><use href="#x"/></svg>
    <span class="w-[5px] h-[34px] border-l border-[#b8b8b8] shrink-0"></span>
    <svg class="w-[31px] h-6 shrink-0"><use href="#undo"/></svg>
    <svg class="w-[16px] h-6 shrink-0"><use href="#caret"/></svg>
    <svg class="w-[31px] h-6 shrink-0"><use href="#redo"/></svg>
    <span class="w-[5px] h-[34px] border-l border-[#b8b8b8] ml-[2px] shrink-0"></span>
    <svg class="w-[31px] h-6 shrink-0"><use href="#layers"/></svg>
    <svg class="w-[16px] h-6 shrink-0 ml-[1px]"><use href="#caret"/></svg>
    <svg class="w-[31px] h-6 ml-[6px] shrink-0"><use href="#dia"/></svg>
    <svg class="w-[31px] h-6 shrink-0"><use href="#swap"/></svg>
    <svg class="w-[31px] h-6 shrink-0"><use href="#dlist"/></svg>
    <span class="w-[5px] h-[34px] border-l border-[#b8b8b8] ml-[4px] shrink-0"></span>
    <svg class="w-[25px] h-6 shrink-0"><use href="#info"/></svg>
    <span class="w-[5px] h-[34px] border-l border-[#b8b8b8] ml-[3px] shrink-0"></span>
    <div class="w-[206px] h-[31px] ml-[3px] bg-white border-2 border-[#c4c4c4] flex items-center justify-between pl-[2px] pr-[4px] shrink-0">
        <span class="text-[18px] text-[#a8a8a8]">查找命令</span>
        <svg class="w-[24px] h-[24px]" viewBox="0 0 24 24"><circle cx="15" cy="9" r="6.500" fill="#fff" stroke="#333" stroke-width="1.600"/><path d="M10 14l-7 7" stroke="#555" stroke-width="3.500"/></svg>
    </div>
    <svg class="w-[31px] h-6 ml-[3px] shrink-0"><use href="#pyr"/></svg>
    <svg class="w-[31px] h-6 shrink-0"><use href="#gridc"/></svg>
    <svg class="w-[31px] h-6 shrink-0"><use href="#ybox"/></svg>
    <svg class="w-[31px] h-6 shrink-0"><use href="#wire"/></svg>
    <svg class="w-[31px] h-6 shrink-0"><use href="#tap"/></svg>
    <svg class="w-[16px] h-6 shrink-0"><use href="#caret"/></svg>
    <span class="w-[5px] h-[34px] border-l border-[#b8b8b8] shrink-0"></span>
    <div class="w-[20px] h-[31px] bg-white border border-[#999] rounded-l shrink-0 ml-[1px]"></div>
</div>

<!-- 工具栏 2 -->
<div class="h-[35px] bg-gradient-to-b from-[#e0e0e0] to-[#cdcdcd] border-b border-[#f2f2f2] flex items-center overflow-hidden">
    <span class="w-[3px] h-[26px] ml-[4px] mr-[1px] border-l-2 border-dotted border-[#999] shrink-0"></span>
    <svg class="w-[31px] h-6 shrink-0"><use href="#cyl"/></svg>
    <svg class="w-[16px] h-6 shrink-0"><use href="#caret"/></svg>
    <svg class="w-[31px] h-6 shrink-0"><use href="#ext"/></svg>
    <svg class="w-[31px] h-6 shrink-0"><use href="#rev"/></svg>
    <svg class="w-[31px] h-6 shrink-0" viewBox="0 0 24 24"><path d="M5 5l7-3 8 2v11l-8 3-7-2z" fill="url(#bl)" stroke="#2d47b8"/><circle cx="11" cy="11" r="3" fill="#f6a030" stroke="#e01010"/><path d="M1 21h5" stroke="#e01010" stroke-width="2"/><text x="8" y="24" font-size="6.500" font-weight="700" fill="#223">NX5</text></svg>
    <svg class="w-[31px] h-6 shrink-0"><use href="#boss"/></svg>
    <svg class="w-[31px] h-6 shrink-0"><use href="#pad"/></svg>
    <svg class="w-[31px] h-6 shrink-0"><use href="#thread"/></svg>
    <span class="w-[5px] h-[30px] border-l border-[#f4f4f4] shrink-0"></span>
    <svg class="w-[31px] h-6 shrink-0"><use href="#emb"/></svg>
    <svg class="w-[31px] h-6 shrink-0"><use href="#pins"/></svg>
    <svg class="w-[31px] h-6 shrink-0"><use href="#pat"/></svg>
    <svg class="w-[31px] h-6 shrink-0"><use href="#mir"/></svg>
    <svg class="w-[31px] h-6 shrink-0"><use href="#unite"/></svg>
    <svg class="w-[16px] h-6 shrink-0"><use href="#caret"/></svg>
    <svg class="w-[31px] h-6 shrink-0"><use href="#pil"/></svg>
    <svg class="w-[31px] h-6 shrink-0"><use href="#ebox"/></svg>
    <svg class="w-[31px] h-6 shrink-0"><use href="#sweep"/></svg>
    <svg class="w-[31px] h-6 shrink-0"><use href="#slab"/></svg>
    <svg class="w-[31px] h-6 shrink-0"><use href="#frame"/></svg>
    <svg class="w-[31px] h-6 shrink-0"><use href="#chord"/></svg>
    <svg class="w-[31px] h-6 shrink-0"><use href="#rnd"/></svg>
    <span class="w-[5px] h-[30px] border-l border-[#f4f4f4] shrink-0"></span>
    <svg class="w-[31px] h-6 shrink-0"><use href="#bx1"/></svg>
    <svg class="w-[31px] h-6 shrink-0"><use href="#bx2"/></svg>
    <svg class="w-[31px] h-6 shrink-0"><use href="#crn1"/></svg>
    <svg class="w-[31px] h-6 shrink-0"><use href="#crn2"/></svg>
    <svg class="w-[31px] h-6 shrink-0"><use href="#band"/></svg>
    <svg class="w-[31px] h-6 shrink-0"><use href="#cup"/></svg>
    <svg class="w-[31px] h-6 shrink-0"><use href="#blend"/></svg>
    <svg class="w-[31px] h-6 shrink-0"><use href="#top"/></svg>
    <svg class="w-[31px] h-6 shrink-0"><use href="#pry"/></svg>
    <svg class="w-[31px] h-6 shrink-0"><use href="#cyl"/></svg>
    <svg class="w-[31px] h-6 shrink-0"><use href="#diam"/></svg>
    <svg class="w-[31px] h-6 shrink-0"><use href="#cb"/></svg>
    <svg class="w-[31px] h-6 shrink-0"><use href="#door"/></svg>
</div>

<!-- 工具栏 3 -->
<div class="h-[35px] bg-gradient-to-b from-[#e0e0e0] to-[#c8c8c8] flex items-center overflow-hidden">
    <span class="w-[3px] h-[26px] ml-[4px] mr-[1px] border-l-2 border-dotted border-[#999] shrink-0"></span>
    <svg class="w-[31px] h-6 shrink-0"><use href="#ln"/></svg>
    <svg class="w-[16px] h-6 shrink-0"><use href="#caret"/></svg>
    <svg class="w-[31px] h-6 shrink-0"><use href="#cln"/></svg>
    <svg class="w-[31px] h-6 shrink-0"><use href="#ln"/></svg>
    <svg class="w-[31px] h-6 shrink-0"><use href="#arc"/></svg>
    <svg class="w-[31px] h-6 shrink-0"><use href="#chain"/></svg>
    <svg class="w-[31px] h-6 shrink-0"><use href="#spiral"/></svg>
    <svg class="w-[31px] h-6 shrink-0" viewBox="0 0 24 24"><text x="0" y="10" font-size="9.500" font-weight="700" fill="#b01818" font-family="Liberation Sans">XYZ=</text><path d="M1 20c4-7 7-4 10-1s7 3 12-2" fill="none" stroke="#222" stroke-width="1.300"/></svg>
    <svg class="w-[31px] h-6 shrink-0"><use href="#surf"/></svg>
    <svg class="w-[31px] h-6 shrink-0"><use href="#node"/></svg>
    <span class="w-[31px] text-center text-[26px] font-bold leading-none shrink-0 font-['Liberation_Serif',serif]">A</span>
    <svg class="w-[31px] h-6 shrink-0"><use href="#heart"/></svg>
    <svg class="w-[31px] h-6 shrink-0"><use href="#strip"/></svg>
    <svg class="w-[31px] h-6 shrink-0"><use href="#shld"/></svg>
    <svg class="w-[31px] h-6 shrink-0"><use href="#cv1"/></svg>
    <svg class="w-[31px] h-6 shrink-0"><use href="#cv2"/></svg>
    <svg class="w-[31px] h-6 shrink-0"><use href="#proj"/></svg>
    <svg class="w-[31px] h-6 shrink-0"><use href="#plane2"/></svg>
    <svg class="w-[31px] h-6 shrink-0"><use href="#sect"/></svg>
    <svg class="w-[31px] h-6 shrink-0"><use href="#fil"/></svg>
    <svg class="w-[31px] h-6 shrink-0"><use href="#shell"/></svg>
    <svg class="w-[31px] h-6 shrink-0"><use href="#cylr"/></svg>
    <svg class="w-[31px] h-6 shrink-0"><use href="#plus"/></svg>
    <svg class="w-[16px] h-6 shrink-0"><use href="#caret"/></svg>
    <span class="w-[5px] h-[34px] border-l border-[#f4f4f4] shrink-0 ml-[3px]"></span>
    <span class="w-[3px] h-[26px] mr-[1px] border-l-2 border-dotted border-[#999] shrink-0"></span>
    <svg class="w-[31px] h-6 shrink-0"><use href="#fit"/></svg>
    <svg class="w-[16px] h-6 shrink-0"><use href="#caret"/></svg>
    <svg class="w-[31px] h-6 shrink-0"><use href="#cam"/></svg>
    <svg class="w-[16px] h-6 shrink-0"><use href="#caret"/></svg>
    <svg class="w-[31px] h-6 shrink-0"><use href="#cb3"/></svg>
    <svg class="w-[16px] h-6 shrink-0"><use href="#caret"/></svg>
    <svg class="w-[31px] h-6 shrink-0"><use href="#cb"/></svg>
    <svg class="w-[31px] h-6 shrink-0"><use href="#cb2"/></svg>
    <svg class="w-[31px] h-6 shrink-0"><use href="#wf"/></svg>
    <svg class="w-[31px] h-6 shrink-0"><use href="#wf2"/></svg>
    <div class="w-[28px] h-[31px] bg-white border border-[#777] rounded-sm shrink-0 flex items-center"><svg class="w-[26px] h-6 shrink-0"><use href="#wcs"/></svg></div>
</div>

<!-- 选择条 -->
<div class="h-[38px] bg-gradient-to-b from-[#d4d4d4] to-[#dcdcdc] border-t border-[#aaaaaa] flex items-center text-[18px] overflow-hidden">
    <div class="w-[216px] h-[28px] ml-[5px] bg-white border border-[#777] rounded-[3px] flex items-center justify-between shrink-0">
        <span class="pl-[2px] leading-none">无选择过滤器</span>
        <span class="w-[26px] h-full rounded-r-[2px] border-l border-[#777] bg-gradient-to-b from-[#2f6aae] via-[#6ba7e0] to-[#bcdcf6] flex items-center justify-center"><span class="w-0 h-0 border-x-[6px] border-x-transparent border-t-[6px] border-t-[#10233f]"></span></span>
    </div>
    <div class="w-[228px] h-[28px] ml-[8px] bg-white border border-[#777] rounded-[3px] flex items-center justify-between shrink-0">
        <span class="pl-[2px] leading-none">整个装配</span>
        <span class="w-[26px] h-full rounded-r-[2px] border-l border-[#777] bg-gradient-to-b from-[#2f6aae] via-[#6ba7e0] to-[#bcdcf6] flex items-center justify-center"><span class="w-0 h-0 border-x-[6px] border-x-transparent border-t-[6px] border-t-[#10233f]"></span></span>
    </div>
    <svg class="w-[24px] h-6 ml-[3px] shrink-0"><use href="#fchain"/></svg>
    <span class="w-[5px] h-[34px] border-l border-[#f4f4f4] ml-[5px] shrink-0"></span>
    <svg class="w-[24px] h-[20px] shrink-0"><use href="#fnl"/></svg>
    <svg class="w-[24px] h-[20px] shrink-0"><use href="#xb"/></svg>
    <svg class="w-[12px] h-6 shrink-0"><use href="#caret"/></svg>
    <svg class="w-[24px] h-[20px] shrink-0"><use href="#fl2"/></svg>
    <svg class="w-[12px] h-6 shrink-0"><use href="#caret"/></svg>
    <svg class="w-[22px] h-[20px] shrink-0"><use href="#fl3"/></svg>
    <div class="w-[84px] h-[28px] ml-[2px] bg-[#cfcfcf] border border-[#aaa] rounded-[3px] flex items-center justify-between text-[#aaa] shrink-0">
        <span class="pl-[2px] leading-none">全部</span>
        <span class="w-[26px] h-full bg-gradient-to-b from-[#cccccc] to-[#f2f2f2] border-l border-[#bbb] flex items-center justify-center"><span class="w-0 h-0 border-x-[6px] border-x-transparent border-t-[6px] border-t-[#aaa]"></span></span>
    </div>
    <svg class="w-[24px] h-[18px] ml-[1px] shrink-0"><use href="#fchain"/></svg>
    <span class="w-[5px] h-[34px] border-l border-[#f4f4f4] ml-[6px] shrink-0"></span>
    <svg class="w-[18px] h-[18px] ml-[1px] shrink-0"><use href="#hex"/></svg>
    <svg class="w-[22px] h-[20px] ml-[4px] shrink-0"><use href="#dsh"/></svg>
    <svg class="w-[14px] h-6 shrink-0"><use href="#caret"/></svg>
    <div class="w-[179px] h-[28px] ml-[5px] bg-white border border-[#777] rounded-[3px] flex items-center justify-between shrink-0">
        <span class="pl-[2px] leading-none">内侧</span>
        <span class="w-[26px] h-full rounded-r-[2px] border-l border-[#777] bg-gradient-to-b from-[#2f6aae] via-[#6ba7e0] to-[#bcdcf6] flex items-center justify-center"><span class="w-0 h-0 border-x-[6px] border-x-transparent border-t-[6px] border-t-[#10233f]"></span></span>
    </div>
    <span class="w-[5px] h-[34px] border-l border-[#f4f4f4] ml-[7px] shrink-0"></span>
    <svg class="w-[24px] h-[20px] shrink-0"><use href="#tag"/></svg>
    <svg class="w-[24px] h-[20px] shrink-0"><use href="#bcube"/></svg>
</div>

<div class="h-[592px] flex overflow-hidden">
    <!-- 左侧工具条 -->
    <aside class="w-[51px] shrink-0 bg-gradient-to-r from-[#e0e0e0] to-[#d0d0d0] border-r border-[#999] flex flex-col items-start">
        <span class="w-[44px] h-[4px] ml-[3px] mt-[3px] mb-[3px] border-t-2 border-dotted border-[#999]"></span>
        <svg class="w-[50px] h-6 my-[3.5px] shrink-0"><use href="#s1"/></svg>
        <svg class="w-[50px] h-6 my-[3.5px] shrink-0"><use href="#s2"/></svg>
        <svg class="w-[50px] h-6 my-[3.5px] shrink-0"><use href="#s3"/></svg>
        <svg class="w-[50px] h-6 my-[3.5px] shrink-0"><use href="#s4"/></svg>
        <div class="flex items-center h-[31px] shrink-0"><svg class="w-[34px] h-6 shrink-0"><use href="#s5"/></svg><svg class="w-[14px] h-6 shrink-0"><use href="#caret"/></svg></div>
        <svg class="w-[50px] h-6 my-[3.5px] shrink-0"><use href="#s6"/></svg>
        <svg class="w-[50px] h-6 my-[3.5px] shrink-0"><use href="#s7"/></svg>
        <svg class="w-[50px] h-6 my-[3.5px] shrink-0"><use href="#s8"/></svg>
        <svg class="w-[50px] h-6 my-[3.5px] shrink-0"><use href="#s9"/></svg>
        <svg class="w-[50px] h-6 my-[3.5px] shrink-0"><use href="#s10"/></svg>
        <svg class="w-[50px] h-6 my-[3.5px] shrink-0"><use href="#s11"/></svg>
        <svg class="w-[50px] h-6 my-[3.5px] shrink-0"><use href="#s12"/></svg>
        <svg class="w-[50px] h-6 my-[3.5px] shrink-0"><use href="#s13"/></svg>
        <svg class="w-[50px] h-6 my-[3.5px] shrink-0"><use href="#s14"/></svg>
        <svg class="w-[50px] h-6 my-[3.5px] shrink-0"><use href="#s15"/></svg>
        <div class="w-full flex items-center justify-between px-[11px] mt-[28px] h-[14px] shrink-0">
            <span class="w-0 h-0 border-y-[4px] border-y-transparent border-r-[5px] border-r-[#111]"></span>
            <svg class="w-[9px] h-[10px]" viewBox="0 0 9 10"><path d="M1 1l3.500 3L8 1M1 5l3.500 3L8 5" fill="none" stroke="#111" stroke-width="1.500"/></svg>
        </div>
        <span class="w-full h-[6px] mt-[2px] border-b-2 border-[#f2f2f2]"></span>
        <span class="w-[44px] h-[4px] ml-[3px] mt-[2px] border-t-2 border-dotted border-[#999]"></span>
        <svg class="w-[50px] h-6 my-[3px] shrink-0"><use href="#s16"/></svg>
        <svg class="w-[50px] h-6 my-[3px] shrink-0"><use href="#s17"/></svg>
    </aside>

    <!-- 图形窗口 -->
    <main class="relative flex-1 bg-gradient-to-b from-[#26272a] to-[#585a5c] overflow-hidden">
        <!-- 螺母 + 水印（自由画布，坐标 = 页面坐标 - (51,215)） -->
        <svg class="absolute left-0 top-0 w-[980px] h-[592px]" viewBox="51 215 980 592">
            <path d="M245 548l7-13v40z" fill="#f0a000"/>
            <path d="M703 482l19-32 41-52 104-20 33 2 40 32 38 30-61 83-138 19z" fill="#ffa800"/>
            <path d="M722 450c15-30 41-52 41-52 40-14 90-22 137-18 30 14 55 38 78 62-25 22-45 50-61 83-50-3-95 5-138 19-20-24-45-45-76-62z" fill="#ffc800"/>
            <path d="M860 527c22-4 45-15 63-30l-6 28z" fill="#ffe020"/>
            <path d="M703 482c30 13 56 36 76 62l24 134-77-63z" fill="#965e00"/>
            <path d="M779 544c44-14 90-21 138-19l23 134-137 19z" fill="#875200"/>
            <path d="M917 525c14-33 35-61 61-83l23 133-61 84z" fill="#d58200"/>
            <path d="M726 615l77 63 137-19 61-84" fill="none" stroke="#6a78ff" stroke-width="2"/>
            <ellipse cx="839" cy="453" rx="119" ry="69" transform="rotate(-12 839 453)" fill="none" stroke="#10e820" stroke-width="1.500"/>
            <path d="M900 370L778 536" stroke="#10e820" stroke-width="1.500"/>
            <path d="M953 290l48 272" stroke="#10e820" stroke-width="3"/>
            <!-- 水印 -->
            <path d="M772 702l43 23v48l-42 23-43-23v-48z" fill="#3a6a9f" stroke="#d0d5da" stroke-width="2"/>
            <path d="M772 703l42 23v47l-41 22-16-10c20 0 36-8 43-22 8-20-6-46-28-60z" fill="#3d92bb"/>
            <path d="M772 725l21 12v26l-21 12-21-12v-26z" fill="#3a6a9f" stroke="#d0d5da" stroke-width="3"/>
            <path d="M772 749l21-12v26l-21 12z" fill="#3d92bb"/>
            <path d="M751 737l21 12 21-12M772 749v26" fill="none" stroke="#d0d5da" stroke-width="1"/>
            <text x="822" y="757" font-size="44" font-weight="700" fill="#3f94bf" stroke="#dfe4e8" stroke-width="2" paint-order="stroke" textLength="204" lengthAdjust="spacingAndGlyphs" font-family="Noto Sans CJK SC">3D世界网</text>
            <text x="823" y="780" font-size="15" font-weight="700" fill="#3f94bf" stroke="#dfe4e8" stroke-width="2" paint-order="stroke" textLength="198" lengthAdjust="spacing" font-family="Liberation Sans">WWW.3DSJW.COM</text>
        </svg>

        <!-- 图层设置 对话框 -->
        <section class="absolute left-[201px] top-[46px] w-[449px] h-[546px] bg-[#d3d3d3] rounded-t-[4px] border-x border-[#555] overflow-hidden">
            <div class="h-[26px] bg-[#1a1a1a] border-t border-[#666] flex items-center text-white">
                <svg class="w-[26px] h-[14px] shrink-0" viewBox="0 0 14 14"><circle cx="7" cy="7" r="3.500" fill="none" stroke="#fff" stroke-width="2.500"/><circle cx="7" cy="7" r="5.500" fill="none" stroke="#fff" stroke-width="1.500" stroke-dasharray="2 2"/></svg>
                <span class="w-px h-full bg-[#888]"></span>
                <span class="flex-1 pl-[8px] text-[18px] font-bold leading-none">图层设置</span>
                <span class="w-px h-full bg-[#888]"></span>
                <svg class="w-[27px] h-[12px] shrink-0" viewBox="0 0 12 12"><path d="M3 10c4 2 7-1 7-4 0-2-1-3-3-4" fill="none" stroke="#fff" stroke-width="2"/></svg>
                <span class="w-px h-full bg-[#888]"></span>
                <svg class="w-[26px] h-[12px] shrink-0" viewBox="0 0 12 12"><path d="M2 2l8 8M10 2l-8 8" stroke="#fff" stroke-width="2.600"/></svg>
            </div>
            <div class="flex h-[520px]">
                <!-- 面板 -->
                <div class="w-[415px] pl-[5px] pt-[4px] flex flex-col shrink-0">
                    <div class="h-[28px] bg-gradient-to-b from-[#fbfbfb] via-[#f0f0f0] to-[#d8d8d8] border-b border-[#777] flex items-center text-[18px] text-[#101078] leading-none">
                        <span class="flex-1 pl-[6px] pt-[2px] whitespace-nowrap">查找以下对象所在的图层</span>
                        <span class="w-[30px] h-full border-l border-white flex items-center justify-center"><svg class="w-[12px] h-[8px]" viewBox="0 0 12 8"><path d="M1 7l5-5 5 5" fill="none" stroke="#555" stroke-width="2.500"/></svg></span>
                    </div>
                    <div class="h-[48px] flex items-center pl-[8px] pr-[9px]">
                        <div class="flex-1 h-[31px] rounded-[5px] bg-gradient-to-r from-[#e2a870] to-[#d4d0c8] flex items-center text-[18px] leading-none">选择对象 (0)</div>
                        <div class="w-[30px] h-[30px] rounded-[3px] border border-[#777] bg-gradient-to-b from-[#f08a40] via-[#ffb070] to-[#ff8030] flex items-center justify-center"><svg class="w-[20px] h-[20px]" viewBox="0 0 20 20"><circle cx="10" cy="10" r="5" fill="none" stroke="#e01010" stroke-width="1.300"/><path d="M10 1v18M1 10h18" stroke="#111"/></svg></div>
                    </div>
                    <div class="h-[28px] bg-gradient-to-b from-[#fbfbfb] via-[#f0f0f0] to-[#d8d8d8] border-b border-[#777] flex items-center text-[18px] text-[#101078] leading-none">
                        <span class="flex-1 pl-[6px] pt-[2px]">工作图层</span>
                        <span class="w-[30px] h-full border-l border-white flex items-center justify-center"><svg class="w-[12px] h-[8px]" viewBox="0 0 12 8"><path d="M1 7l5-5 5 5" fill="none" stroke="#555" stroke-width="2.500"/></svg></span>
                    </div>
                    <div class="h-[46px] flex items-center justify-between pl-[8px] pr-[9px] text-[18px] leading-none">
                        <span>工作图层</span>
                        <div class="w-[88px] h-[28px] bg-white border border-[#888] rounded-[4px] text-right pr-[4px] leading-[27px] font-['Liberation_Serif',serif]">61</div>
                    </div>
                    <div class="h-[28px] bg-gradient-to-b from-[#fbfbfb] via-[#f0f0f0] to-[#d8d8d8] border-b border-[#777] flex items-center text-[18px] text-[#101078] leading-none">
                        <span class="flex-1 pl-[6px] pt-[2px]">图层</span>
                        <span class="w-[30px] h-full border-l border-white flex items-center justify-center"><svg class="w-[12px] h-[8px]" viewBox="0 0 12 8"><path d="M1 7l5-5 5 5" fill="none" stroke="#555" stroke-width="2.500"/></svg></span>
                    </div>
                    <div class="flex items-center justify-between pl-[8px] pr-[9px] pt-[7px] text-[18px] leading-none">
                        <span>按范围/类别选择图层</span>
                        <div class="w-[90px] h-[29px] bg-white border border-[#888] rounded-[4px]"></div>
                    </div>
                    <div class="flex items-center gap-[9px] pl-[8px] pt-[9px] text-[18px] leading-none">
                        <span class="w-[16px] h-[16px] border border-[#888] rounded-[3px] bg-gradient-to-b from-[#eeeeee] to-[#c4c4c4]"></span>
                        <span>类别显示</span>
                    </div>
                    <div class="flex items-center justify-between pl-[8px] pr-[9px] pt-[7px] text-[18px] leading-none text-[#a8a8a8]">
                        <span class="pt-[2px]">类别过滤器</span>
                        <div class="w-[151px] h-[31px] bg-[#cfcfcf] border border-[#aaa] rounded-[4px] flex justify-between">
                            <span class="pl-[4px] pt-[3px] text-[#666]">*</span>
                            <span class="w-[26px] h-full bg-gradient-to-b from-[#cccccc] to-[#f4f4f4] border-l border-[#bbb] flex items-center justify-center"><span class="w-0 h-0 border-x-[6px] border-x-transparent border-t-[6px] border-t-[#aaa]"></span></span>
                        </div>
                    </div>
                    <!-- 表格 -->
                    <div class="mt-[2px] ml-[8px] mr-[8px] flex-1 bg-white border border-[#777] overflow-hidden relative">
                        <div class="h-[29px] flex text-[22px] leading-none tracking-[2px] bg-gradient-to-b from-[#f6f6f6] via-[#eeeeee] to-[#d4d4d4] border-b border-[#888] text-[#222]">
                            <div class="w-[151px] pl-[7px] flex items-center gap-[21px] shrink-0"><span>名称</span><span class="w-0 h-0 border-x-[5px] border-x-transparent border-b-[6px] border-b-[#111]"></span></div>
                            <div class="w-[85px] pl-[5px] flex items-center border-l border-[#bbb] shrink-0">仅可见</div>
                            <div class="w-[150px] pl-[3px] flex items-center shrink-0 bg-gradient-to-b from-[#e6f6ff] via-[#9fdcf8] to-[#4fd2f8] border border-[#3a7ad8] border-b-0">对象数</div>
                        </div>
                        <div class="h-[27px] flex items-center relative text-[22px] text-[#1c2a5c] font-['Liberation_Serif','Noto_Sans_CJK_SC',serif]">
                            <span class="absolute left-[23px] top-[7px] w-[12px] h-[12px] border border-[#222] bg-white flex items-center justify-center"><svg class="w-[10px] h-[10px]" viewBox="0 0 10 10"><path d="M1 5l3 3 5-6" fill="none" stroke="#c8c8c8" stroke-width="2"/></svg></span>
                            <span class="absolute left-[36px] right-0 top-0 bottom-0 border-y border-l border-dotted border-[#333] pl-[3px] leading-[25px]">1</span>
                            <span class="absolute left-[158px] top-[7px] w-[12px] h-[12px] border border-[#222] bg-white flex items-center justify-center"><svg class="w-[10px] h-[10px]" viewBox="0 0 10 10"><path d="M1 5l3 3 5-6" fill="none" stroke="#e01010" stroke-width="2.400"/></svg></span>
                            <span class="absolute left-[241px] top-0 leading-[27px]">27</span>
                        </div>
                        <div class="h-[28px] flex items-center relative bg-[#f5f5f5] border-y border-[#e2e2e2] text-[#16244f] font-['Liberation_Serif','Noto_Sans_CJK_SC',serif] [-webkit-text-stroke:0.4px_#16244f]">
                            <svg class="absolute left-[20px] top-[4px] w-[17px] h-[18px]" viewBox="0 0 17 18"><path d="M1 7l7-3 7 3-7 3zM1 10l7 3 7-3M1 13l7 3 7-3" fill="#bfe0b8" stroke="#6f9a66"/><path d="M8 1v6M5 4h6" stroke="#1a2cd0" stroke-width="2"/></svg>
                            <span class="absolute left-[40px] leading-none whitespace-nowrap text-[23px]">61<span class="text-[18.5px]">（工作）</span></span>
                            <span class="absolute left-[241px] leading-none text-[22px]">8</span>
                        </div>
                        <div class="h-[28px] border-b border-[#e2e2e2]"></div>
                        <div class="h-[28px] border-b border-[#e2e2e2] bg-[#f5f5f5]"></div>
                        <div class="h-[28px] border-b border-[#e2e2e2]"></div>
                        <div class="h-[28px] border-b border-[#e2e2e2] bg-[#f5f5f5]"></div>
                        <div class="h-[28px] border-b border-[#e2e2e2]"></div>
                        <div class="h-[28px] border-b border-[#e2e2e2] bg-[#f5f5f5]"></div>
                        <!-- 列线 / 树线 -->
                        <span class="absolute left-[150px] top-[29px] bottom-0 w-px bg-black"></span>
                        <span class="absolute left-[235px] top-[29px] bottom-0 w-px bg-[#e2e2e2]"></span>
                        <span class="absolute left-[386px] top-[29px] bottom-0 w-px bg-[#e2e2e2]"></span>
                        <span class="absolute left-[10px] top-[42px] w-[12px] h-[29px] border-l border-t border-dotted border-[#888]"></span>
                        <span class="absolute left-[10px] top-[71px] w-[9px] border-t border-dotted border-[#888]"></span>
                    </div>
                </div>
                <!-- 滚动条 -->
                <div class="flex-1 bg-[#eeeeee] flex flex-col items-center pr-[3px]">
                    <div class="h-[31px] w-full bg-[#e6e6e6] flex items-center justify-center shrink-0"><span class="w-0 h-0 mt-[4px] border-x-[5px] border-x-transparent border-b-[6px] border-b-[#444]"></span></div>
                    <div class="w-[24px] h-[395px] bg-gradient-to-r from-[#d6d6d6] to-[#c8c8c8] border border-[#aaa] flex items-center justify-center shrink-0">
                        <span class="w-[12px] h-[13px] border-y-[1px] border-[#777] flex items-center"><span class="w-full h-[5px] border-y border-[#777]"></span></span>
                    </div>
                </div>
            </div>

            <!-- 标注 -->
            <svg class="absolute left-[150px] top-[293px] w-[116px] h-[96px]" viewBox="0 0 116 96"><ellipse cx="58" cy="48" rx="54" ry="44" transform="rotate(-8 58 48)" fill="none" stroke="#e8060c" stroke-width="4"/></svg>
            <div class="absolute left-[174px] top-[447px] w-[151px] h-[73px] bg-[#ffffc8] border-[2.500px] border-[#f00000] shadow-[3px_3px_5px_rgba(0,0,0,0.5)] pl-[12px] pt-[6px] text-[20px] font-bold tracking-[5px] leading-[30px] text-black whitespace-nowrap">把它取了</div>
        </section>
    </main>
</div>
</body>
</html>
